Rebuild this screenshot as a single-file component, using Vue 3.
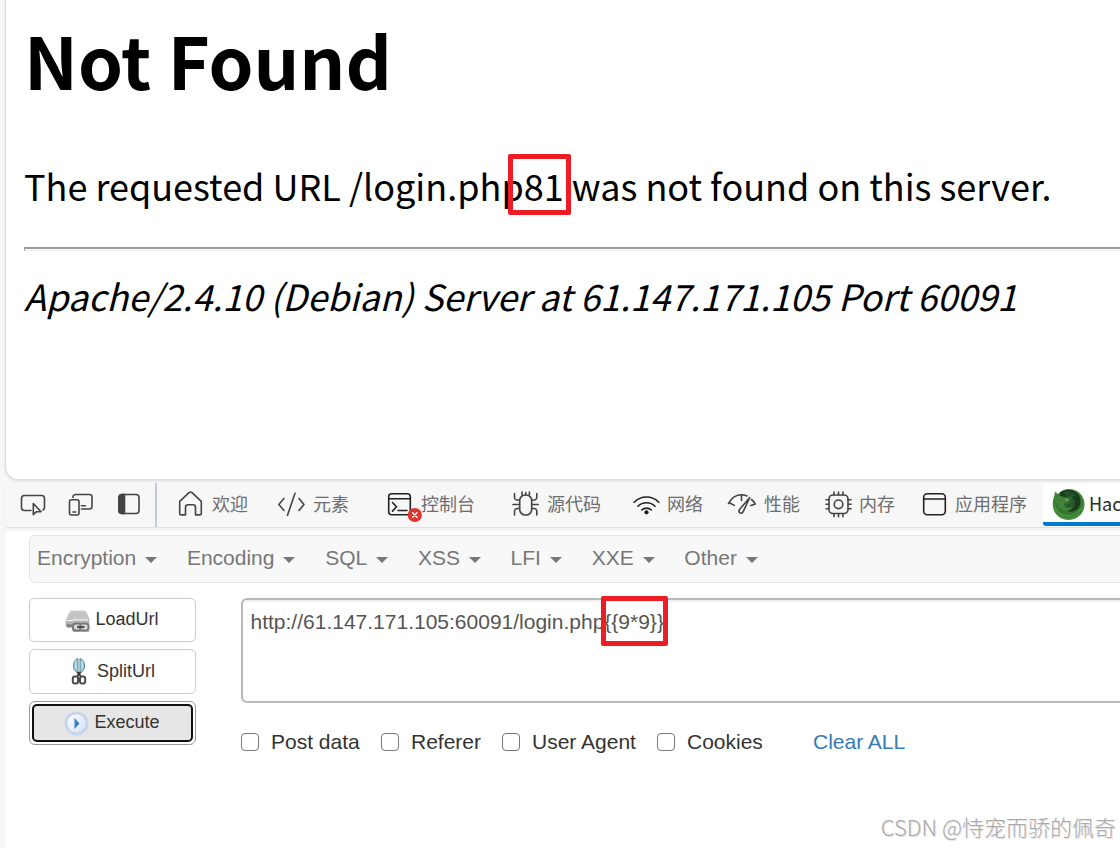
<script setup>
const tabs = [
  { label: '欢迎', icon: 'home', width: 100, gap: 7 },
  { label: '元素', icon: 'code', width: 109, gap: 8 },
  { label: '控制台', icon: 'console', width: 125, gap: 7 },
  { label: '源代码', icon: 'bug', width: 121, gap: 8 },
  { label: '网络', icon: 'wifi', width: 95, gap: 7 },
  { label: '性能', icon: 'gauge', width: 97, gap: 9 },
  { label: '内存', icon: 'chip', width: 97, gap: 7 },
  { label: '应用程序', icon: 'app', width: 122, gap: 6 },
]
const menus = ['Encryption', 'Encoding', 'SQL', 'XSS', 'LFI', 'XXE', 'Other']
const checks = [
  { label: 'Post data', width: 140 },
  { label: 'Referer', width: 121 },
  { label: 'User Agent', width: 155 },
  { label: 'Cookies', width: 156 },
]
const url = 'http://61.147.171.105:60091/login.php'
const payload = '{{9*9}}'
</script>

<template>
  <div class="screen">
    <section class="page">
      <h1>Not Found</h1>
      <p class="msg">The requested URL /login.php81 was not found on this server.</p>
      <div class="rule"></div>
      <p class="addr">Apache/2.4.10 (Debian) Server at 61.147.171.105 Port 60091</p>
      <div class="mark mark-top"></div>
    </section>

    <div class="toolbar">
      <div class="tools">
        <svg width="26" height="28" viewBox="0 0 26 28" class="ic">
          <path d="M11 20.500H4.500a3 3 0 0 1-3-3V8.500a3 3 0 0 1 3-3h17a3 3 0 0 1 3 3v9a3 3 0 0 1-1.500 2.500" />
          <path d="M13.300 13.500v11.200l3.200-3h4.500z" />
        </svg>
        <svg width="26" height="28" viewBox="0 0 26 28" class="ic">
          <rect x="1.500" y="9.700" width="9.500" height="15.300" rx="2" />
          <path d="M5 7.500V7a2.500 2.500 0 0 1 2.500-2.500h14A2.500 2.500 0 0 1 24 7v9.500a2.500 2.500 0 0 1-2.500 2.500H13.500M13.500 15.700h3.800M5 22h2.700" />
        </svg>
        <svg width="26" height="28" viewBox="0 0 26 28" class="ic">
          <rect x="3" y="4.500" width="20" height="19" rx="3" />
          <path d="M3 7.500a3 3 0 0 1 3-3h2.500v19H6a3 3 0 0 1-3-3z" fill="#444" />
        </svg>
      </div>
      <div class="tabs">
        <div v-for="t in tabs" :key="t.icon" class="tab" :style="{ width: t.width + 'px', gap: t.gap + 'px' }">
          <svg width="28" height="28" viewBox="0 0 28 28" class="ic">
            <g v-if="t.icon === 'home'">
              <path d="M2.700 11.700L12 3a2.200 2.200 0 0 1 3 0l9.300 8.700v12a1.500 1.500 0 0 1-1.500 1.500h-4.300V17.500a2.500 2.500 0 0 0-2.500-2.500h-5a2.500 2.500 0 0 0-2.500 2.500v7.700H4.200a1.500 1.500 0 0 1-1.500-1.500z" transform="translate(0 -.300)" />
            </g>
            <g v-else-if="t.icon === 'code'">
              <path d="M7 8.500L1.800 14.500 7 20.500M22 8.500l5 6-5 6M18 3.200L10.500 25.200" />
            </g>
            <g v-else-if="t.icon === 'console'" class="dark">
              <rect x="2.700" y="3.800" width="21.600" height="21" rx="3" />
              <path d="M3 8.700h21M6.500 12.500l4 4.300-4 4.300M12 20.500h9" />
              <circle cx="28.800" cy="25" r="7.100" class="badge" />
              <path d="M26.600 22.800l4.400 4.400M31 22.800l-4.400 4.400" class="x" />
            </g>
            <g v-else-if="t.icon === 'bug'">
              <rect x="8.700" y="5" width="12" height="20" rx="5.500" />
              <path d="M11 5V2M14.700 5V2.500M18.400 5V2M8.500 10H6.200a2.700 2.700 0 0 1-2.700-2.700V3.500M20.800 10h2.300a2.700 2.700 0 0 0 2.700-2.700V3.500M2 14.500h6.500M20.800 14.500h6.500M8.500 18.500H6.200a2.700 2.700 0 0 0-2.700 2.700V25M20.800 18.500h2.300a2.700 2.700 0 0 1 2.700 2.700V25" />
            </g>
            <g v-else-if="t.icon === 'wifi'" class="dark">
              <path d="M2.200 12.300a17 17 0 0 1 24.600 0M6 16.300a12 12 0 0 1 17 0M9.700 20a7 7 0 0 1 9.600 0" />
              <circle cx="14.500" cy="22.300" r="2.100" fill="#222" stroke="none" />
            </g>
            <g v-else-if="t.icon === 'gauge'">
              <path d="M1.500 13.500C4.500 8 9.500 4.800 14.500 4.800c2 0 4 .500 5.500 1.200M2.300 12.700l5 2.700M14.500 5v5.500M24.500 9.500c1.600 1.200 2.900 2.700 3.800 4.500l-4.500 1.500M22.800 7.500L12.700 19.200c-1.300 1.700-.800 3.500.600 3.900 1.300.400 2.500-.300 3-1.800z" />
            </g>
            <g v-else-if="t.icon === 'chip'">
              <rect x="5" y="5" width="19" height="18.500" rx="4" />
              <circle cx="14.500" cy="14.300" r="4.300" />
              <path d="M10 5V2M14.500 5V2M19 5V2M10 26.700v-3M14.500 26.700v-3M19 26.700v-3M5 9.700H2M5 14.200H2M5 18.700H2M27 9.700h-3M27 14.200h-3M27 18.700h-3" />
            </g>
            <g v-else class="dark">
              <rect x="2.700" y="3.800" width="21.600" height="21" rx="3.500" />
              <path d="M3 9h21" />
            </g>
          </svg>
          <span>{{ t.label }}</span>
        </div>
        <div class="tab active">
          <svg width="33" height="33" viewBox="0 0 33 33">
            <defs>
              <radialGradient id="fur" cx="50%" cy="45%" r="55%">
                <stop offset="0" stop-color="#286a2b" />
                <stop offset=".700" stop-color="#37752f" />
                <stop offset="1" stop-color="#4a983f" />
              </radialGradient>
            </defs>
            <path d="M3 3.500l3 2.500C9 2.500 13 1 17 1c9 0 15.500 6.800 15.500 15.500S25.500 32 16.500 32 .700 25 .700 16.500C.700 11 2.500 8.500 3 3.500z" fill="url(#fur)" />
            <path d="M8 4.500C13 .800 21 1.300 25 5c4 3.500 4.500 10 2 14-2.500 4-7 5.500-11 4.500l6-4.500 1-6-4-5-6 1-5-1z" fill="#183b1d" />
            <path d="M12 4c5-1.500 11 1 13 5-3-1-5-1-7 0l-5-1z" fill="#24502a" />
            <path d="M19 10c3 1 5 4 4 8l-5 3-5-3 5-3z" fill="#28582b" />
            <path d="M3.500 9C6 7.500 9 8 10.500 9.500c1.500 1 4 .300 6.500 1l-1 3-3.500 1.500c-1.500 2 0 4.500 2.500 5 2 .400 3.500-.800 5-1-1 2.500-4 4-7 3.500C8 22 3 17 3.500 9z" fill="#408239" />
            <path d="M12 10.500l2.500 1 3-.500-2 2.500z" fill="#79a76b" />
            <path d="M3 19c2 5 6 8 11.500 8.500 6 .500 12-2.500 15-8" fill="none" stroke="#4c9643" stroke-width="1.200" />
          </svg>
          <span>Hac</span>
        </div>
      </div>
    </div>

    <section class="panel">
      <nav class="nav">
        <span v-for="m in menus" :key="m" class="menu">{{ m }}<i class="caret"></i></span>
      </nav>
      <div class="work">
        <div class="buttons">
          <button class="btn load">
            <svg width="25" height="23" viewBox="0 0 25 23">
              <defs>
                <linearGradient id="disk" x1="0" y1="0" x2="0" y2="1">
                  <stop offset="0" stop-color="#e4e4e4" /><stop offset="1" stop-color="#909090" />
                </linearGradient>
              </defs>
              <path d="M6.500 1H19q1.500 0 2.500 2l2.500 6v12.500H8l-1-4H2.500L1 16v-5L4.500 3q.500-2 2-2z" fill="url(#disk)" stroke="#b5b5b5" stroke-width=".700" />
              <path d="M6.500 1.500H19q1.300 0 2 2L22.500 9H8L2.500 9.500 5 3z" fill="#c3c3c3" />
              <path d="M1.500 10.500H7l1-.700h15" stroke="#f5f5f5" fill="none" />
              <path d="M1.500 14.500H7v2H2z" fill="#777" />
              <rect x="8" y="13.500" width="8.500" height="7" rx="3" fill="#ddd" stroke="#777" stroke-width="2" />
              <rect x="15" y="13.500" width="8.500" height="7" rx="3" fill="#ddd" stroke="#7d7d7d" stroke-width="2" />
              <path d="M12 17h7.500" stroke="#4f4f4f" stroke-width="2.200" />
            </svg>
            LoadUrl
          </button>
          <button class="btn split">
            <svg width="16" height="28" viewBox="0 0 16 28">
              <path d="M5 2.500Q2.500 4 2.500 9t4.500 7V1.500z" fill="#9cc7da" stroke="#608b9e" />
              <path d="M11 2.500q2.500 1.500 2.500 6.500T9 16V1.500z" fill="#9cc7da" stroke="#608b9e" />
              <path d="M4.800 4v8M11.200 4v8" stroke="#dcedf4" />
              <path d="M6.500 15L10 19.500M9.500 15L6 19.500" stroke="#333" stroke-width="2" />
              <rect x="1.800" y="19.500" width="5.200" height="7" rx="2" fill="#fff" stroke="#4c4c4c" stroke-width="2" />
              <rect x="9" y="19.500" width="5.200" height="7" rx="2" fill="#fff" stroke="#4c4c4c" stroke-width="2" />
            </svg>
            SplitUrl
          </button>
          <button class="btn exec">
            <span class="ring">
              <svg width="25" height="25" viewBox="0 0 25 25">
                <defs>
                  <linearGradient id="play" x1="0" y1="0" x2="1" y2="1">
                    <stop offset="0" stop-color="#fff" /><stop offset="1" stop-color="#d3e0f2" />
                  </linearGradient>
                </defs>
                <circle cx="12.500" cy="12.500" r="10.700" fill="#b3cbed" stroke="#c5d6ee" stroke-width="2.500" />
                <circle cx="12.500" cy="12.500" r="9.300" fill="url(#play)" />
                <path d="M10.500 7l5 5.500-5 5.500z" fill="#3f7cc9" />
              </svg>
              Execute
            </span>
          </button>
        </div>
        <div class="form">
          <div class="area">{{ url }}{{ payload }}<div class="mark mark-url"></div></div>
          <div class="checks">
            <label v-for="c in checks" :key="c.label" :style="{ width: c.width + 'px' }"><i class="box"></i>{{ c.label }}</label>
            <a>Clear ALL</a>
          </div>
        </div>
      </div>
    </section>
    <div class="watermark">CSDN @恃宠而骄的佩奇</div>
  </div>
</template>

<style>
body { margin: 0; overflow: hidden; }
</style>

<style scoped>
* { box-sizing: border-box; }
.screen { position: relative; width: 1120px; height: 848px; overflow: hidden; background: #f7f7f7; font-family: "Liberation Sans", Arial, sans-serif; display: flex; flex-direction: column; }
.page { position: relative; flex: none; margin-left: 5px; width: 1140px; height: 480px; background: #fff; border: 1px solid #dcdcdc; border-top: 0; border-radius: 0 0 0 13px; padding: 6px 0 0 18px; color: #000; font-family: "Noto Sans CJK SC", sans-serif; box-shadow: 0 1px 3px #ddd; }
h1 { margin: 0; height: 106px; line-height: 106px; font-size: 72px; font-weight: 700; white-space: nowrap; }
.msg, .addr { margin: 0; font-size: 36px; line-height: 56px; white-space: nowrap; }
.msg { margin-top: 45px; height: 56px; }
.rule { margin-top: 34px; height: 4px; border-top: 2px solid #9a9a9a; border-bottom: 1px solid #eee; border-left: 1px solid #9a9a9a; }
.addr { margin-top: 16px; font-style: italic; }
.mark { position: absolute; border: 5px solid #ee1c25; border-radius: 2px; }
.mark-top { left: 502px; top: 154px; width: 63px; height: 61px; }
.toolbar { flex: none; height: 48px; display: flex; margin-left: 6px; border-bottom: 1px solid #e2e2e2; position: relative; box-shadow: 0 2px 4px #eee; }
.tools { flex: none; width: 151px; height: 44px; margin-top: 3px; border-right: 2px solid #c5cad0; display: flex; gap: 22px; padding: 7px 0 0 14px; }
.tabs { flex: none; display: flex; margin-left: 20px; height: 44px; margin-top: 3px; }
.tab { flex: none; display: flex; align-items: flex-start; padding-top: 7px; font: 18px/28px "Noto Sans CJK SC", sans-serif; color: #6e6e6e; white-space: nowrap; }
.tab span { margin-top: -1px; }
.active { width: 110px; background: #fff; border-bottom: 4px solid #0078d4; border-radius: 3px; color: #2a2a2a; padding: 5px 0 0 9px; gap: 4px; height: 43px; }
.active span { line-height: 32px; }
.ic { fill: none; stroke: #444; stroke-width: 1.6; stroke-linecap: round; stroke-linejoin: round; overflow: visible; flex: none; }
.dark { stroke: #222; }
.badge { fill: #dc362e; stroke: none; }
.x { stroke: #fff; stroke-width: 1.4; }
.panel { flex: 1; margin-left: 6px; background: #fff; padding: 7px 0 0 23px; }
.nav { width: 1110px; height: 48px; border: 1px solid #e5e5e5; border-radius: 6px; background: #f8f8f8; display: flex; gap: 29.7px; padding: 0 0 0 7px; font-size: 21px; line-height: 45px; color: #777; }
.menu { display: flex; align-items: center; gap: 9px; height: 43px; }
.caret { width: 12px; height: 6px; margin-top: 5px; border: 6px solid transparent; border-top-color: #777; border-bottom: 0; }
.work { display: flex; margin-top: 15px; gap: 45px; }
.buttons { flex: none; width: 167px; display: flex; flex-direction: column; gap: 7px; }
.btn { height: 44.4px; border: 1px solid #ccc; border-radius: 5px; background: #fff; padding: 0 1px 2px 0; display: flex; align-items: center; justify-content: center; gap: 5px; font: 18px/24px "Liberation Sans", Arial, sans-serif; color: #333; }
.load { padding-bottom: 3px; }
.load svg { margin-top: 5px; }
.split { gap: 10px; }
.split svg { margin: 1px 0 0 2px; }
.exec { border-color: #999; border-radius: 6px; padding: 2px; align-items: stretch; }
.ring { flex: 1; display: flex; align-items: center; justify-content: center; gap: 5px; background: #e6e6e6; border: 2.500px solid #101010; border-radius: 5px; padding: 0 1px 1px 0; }
.ring svg { margin-top: 2px; }
.form { flex: none; width: 900px; }
.area { position: relative; width: 900px; height: 105px; border: 2px solid #b9b9b9; border-radius: 6px; padding: 8px 7.500px; font-size: 21px; line-height: 28px; color: #555; white-space: nowrap; box-shadow: inset 0 2px 2px #f0f0f0; }
.mark-url { left: 358px; top: -4px; width: 67px; height: 50px; }
.checks { display: flex; margin-top: 25px; font-size: 21px; line-height: 28px; color: #333; }
label { flex: none; display: flex; align-items: center; gap: 12px; }
.box { width: 18px; height: 18px; border: 1.500px solid #767676; border-radius: 4px; }
a { color: #337ab7; }
.watermark { position: absolute; right: 4px; bottom: 6px; font: 22px/32px "Noto Sans CJK SC", sans-serif; font-weight: 300; color: #aaa; text-shadow: 1px 1px 1px #ddd; white-space: nowrap; }
</style>
